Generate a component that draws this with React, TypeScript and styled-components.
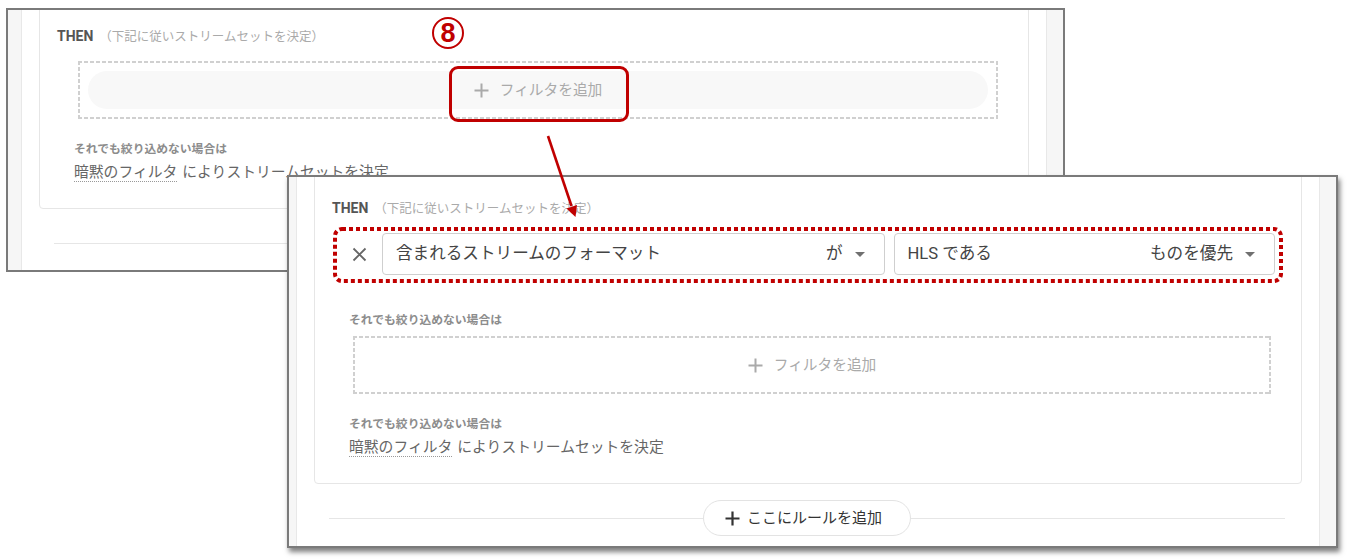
import React from "react";
import styled, { createGlobalStyle } from "styled-components";

const GlobalStyle = createGlobalStyle`
  html, body { margin: 0; padding: 0; background: #fff; }
  body { font-family: Roboto, "Noto Sans CJK JP", sans-serif; }
  *, *::before, *::after { box-sizing: border-box; }
`;

const JP = `Roboto, "Noto Sans CJK JP", sans-serif`;
const RED = "#c00000";

const Canvas = styled.div`
  position: relative;
  width: 1347px;
  height: 559px;
  overflow: hidden;
  background: #fff;
`;

const Frame = styled.section<{
  $left: number;
  $top: number;
  $width: number;
  $height: number;
  $shadow?: boolean;
}>`
  position: absolute;
  left: ${(p) => p.$left}px;
  top: ${(p) => p.$top}px;
  width: ${(p) => p.$width}px;
  height: ${(p) => p.$height}px;
  border: 2px solid #7a7a7a;
  background: #fff;
  display: flex;
  overflow: hidden;
  box-shadow: ${(p) => (p.$shadow ? "2px 4px 5px rgba(0,0,0,0.5)" : "none")};
`;

const SideStrip = styled.div<{ $width: number; $side: "left" | "right" }>`
  flex: 0 0 ${(p) => p.$width}px;
  background: #f6f6f6;
  ${(p) => (p.$side === "left" ? "border-right" : "border-left")}: 1px solid #e8e8e8;
`;

const Main = styled.div`
  flex: 1;
  min-width: 0;
  padding: 0 17px;
  display: flex;
  flex-direction: column;
`;

const Card = styled.div<{ $offset: number }>`
  margin-top: ${(p) => p.$offset}px;
  border: 1px solid #e6e6e6;
  border-radius: 4px;
  padding: 34px 16px 26px 17px;
  display: flex;
  flex-direction: column;
  flex-shrink: 0;
`;

const Header = styled.div`
  display: flex;
  align-items: baseline;
  gap: 6px;
  height: 18px;
  margin-bottom: 16px;
`;

const HeaderTitle = styled.span`
  font: 700 14px/18px ${JP};
  color: #555;
`;

const HeaderNote = styled.span`
  font: 400 12.5px/18px ${JP};
  color: #aaa;
`;

const FilterRow = styled.div`
  display: flex;
  align-items: center;
  height: 42px;
  padding: 0 10px 0 20px;
`;

const RemoveButton = styled.button`
  flex: 0 0 15px;
  width: 15px;
  height: 15px;
  margin-right: 15px;
  padding: 0;
  border: 0;
  background: none;
  color: #666;
  display: flex;
`;

const Select = styled.div<{ $basis: number }>`
  flex: 1 1 ${(p) => p.$basis}px;
  min-width: 0;
  height: 42px;
  border: 1px solid #cfcfcf;
  border-radius: 4px;
  display: flex;
  align-items: center;
  padding: 0 19px 0 13px;
  font: 400 16.6px/22px ${JP};
  color: #444;
  & + & {
    margin-left: 9px;
  }
`;

const SelectValue = styled.span`
  flex: 1;
  white-space: nowrap;
`;

const SelectSuffix = styled.span`
  white-space: nowrap;
  margin-right: 12px;
`;

const FallbackBlock = styled.div<{ $gap: number }>`
  margin-top: ${(p) => p.$gap}px;
  display: flex;
  flex-direction: column;
`;

const FallbackLabel = styled.div`
  margin-left: 17px;
  font: 700 11.8px/16px ${JP};
  color: #8c8c8c;
`;

const dash = (dir: string) =>
  `repeating-linear-gradient(${dir}, #d0d0d0 0 4px, transparent 4px 6px)`;

const AddFilterBox = styled.div<{ $spaced?: boolean }>`
  margin: ${(p) => (p.$spaced ? "8px" : "0")} 14px 0 21px;
  height: 58px;
  padding: 10px 10px;
  display: flex;
  background: ${dash("90deg")} top left / 100% 2px no-repeat,
    ${dash("90deg")} bottom left / 100% 2px no-repeat,
    ${dash("180deg")} top left / 2px 100% no-repeat,
    ${dash("180deg")} top right / 2px 100% no-repeat;
`;

const AddFilterButton = styled.button<{ $hover?: boolean }>`
  flex: 1;
  border: 0;
  border-radius: 19px;
  background: ${(p) => (p.$hover ? "#f8f8f8" : "transparent")};
  display: flex;
  align-items: center;
  justify-content: center;
  gap: 11px;
  color: #aaa;
  font: 400 14.7px/20px ${JP};
  padding: 0;
`;

const ImplicitText = styled.div`
  margin: 5px 0 0 17px;
  font: 400 14.8px/20px ${JP};
  color: #666;
`;

const ImplicitLink = styled.span`
  border-bottom: 1px dotted #999;
  margin-right: 5px;
`;

const Footer = styled.div`
  margin: 16px 17px 0 15px;
  height: 36px;
  display: flex;
  align-items: center;
  flex-shrink: 0;
  &::before,
  &::after {
    content: "";
    flex: 1;
    height: 1px;
    background: #e6e6e6;
  }
`;

const AddRuleButton = styled.button`
  height: 36px;
  border: 1px solid #e3e3e3;
  border-radius: 18px;
  background: #fff;
  padding: 0 28px 0 21px;
  display: flex;
  align-items: center;
  gap: 7px;
  font: 400 15px/20px ${JP};
  color: #333;
`;

/* annotations */
const StepBadge = styled.span`
  position: absolute;
  left: 432px;
  top: 17px;
  width: 32px;
  height: 32px;
  border: 2px solid ${RED};
  border-radius: 50%;
  color: ${RED};
  font: 700 27px/28px "Liberation Sans", Arial, sans-serif;
  display: flex;
  align-items: center;
  justify-content: center;
`;

const Highlight = styled.div`
  position: absolute;
  left: 449px;
  top: 66px;
  width: 180px;
  height: 56px;
  border: 3px solid ${RED};
  border-radius: 9px;
`;

const Overlay = styled.svg<{ $left: number; $top: number }>`
  position: absolute;
  left: ${(p) => p.$left}px;
  top: ${(p) => p.$top}px;
  overflow: visible;
`;

const PlusIcon = ({ size, weight }: { size: number; weight: number }) => (
  <svg width={size} height={size} viewBox={`0 0 ${size} ${size}`}>
    <path
      d={`M${size / 2} 0.5V${size - 0.5}M0.5 ${size / 2}H${size - 0.5}`}
      stroke="currentColor"
      strokeWidth={weight}
      fill="none"
    />
  </svg>
);

const CloseIcon = () => (
  <svg width="15" height="15" viewBox="0 0 15 15">
    <path d="M1.5 1.5L13.5 13.5M13.5 1.5L1.5 13.5" stroke="currentColor" strokeWidth="1.8" fill="none" />
  </svg>
);

const Caret = () => (
  <svg width="10" height="5" viewBox="0 0 10 5">
    <path d="M0 0H10L5 5Z" fill="#707070" />
  </svg>
);

type RuleProps = {
  offset: number;
  withFilter?: boolean;
};

const RuleContent = ({ offset, withFilter }: RuleProps) => (
  <>
    <Card $offset={offset}>
      <Header>
        <HeaderTitle>THEN</HeaderTitle>
        <HeaderNote>（下記に従いストリームセットを決定）</HeaderNote>
      </Header>
      {withFilter ? (
        <>
          <FilterRow>
            <RemoveButton aria-label="削除">
              <CloseIcon />
            </RemoveButton>
            <Select $basis={502}>
              <SelectValue>含まれるストリームのフォーマット</SelectValue>
              <SelectSuffix>が</SelectSuffix>
              <Caret />
            </Select>
            <Select $basis={381}>
              <SelectValue>HLS である</SelectValue>
              <SelectSuffix>ものを優先</SelectSuffix>
              <Caret />
            </Select>
          </FilterRow>
          <FallbackBlock $gap={37}>
            <FallbackLabel>それでも絞り込めない場合は</FallbackLabel>
            <AddFilterBox $spaced>
              <AddFilterButton>
                <PlusIcon size={15} weight={2} />
                フィルタを追加
              </AddFilterButton>
            </AddFilterBox>
          </FallbackBlock>
        </>
      ) : (
        <AddFilterBox>
          <AddFilterButton $hover>
            <PlusIcon size={15} weight={2} />
            フィルタを追加
          </AddFilterButton>
        </AddFilterBox>
      )}
      <FallbackBlock $gap={22}>
        <FallbackLabel>それでも絞り込めない場合は</FallbackLabel>
        <ImplicitText>
          <ImplicitLink>暗黙のフィルタ</ImplicitLink>によりストリームセットを決定
        </ImplicitText>
      </FallbackBlock>
    </Card>
    <Footer>
      <AddRuleButton>
        <PlusIcon size={15} weight={2.2} />
        ここにルールを追加
      </AddRuleButton>
    </Footer>
  </>
);

export default function App() {
  return (
    <Canvas>
      <GlobalStyle />
      <Frame $left={6} $top={8} $width={1059} $height={264}>
        <SideStrip $width={14} $side="left" />
        <Main>
          <RuleContent offset={-18} />
        </Main>
        <SideStrip $width={17} $side="right" />
      </Frame>

      <StepBadge>8</StepBadge>
      <Highlight />

      <Frame $left={287} $top={175} $width={1051} $height={373} $shadow>
        <SideStrip $width={8} $side="left" />
        <Main>
          <RuleContent offset={-13} withFilter />
        </Main>
        <SideStrip $width={17} $side="right" />
      </Frame>

      <Overlay $left={333} $top={227} width="950" height="56" viewBox="0 0 950 56">
        <rect x="2" y="2" width="946" height="52" rx="7" fill="none" stroke={RED} strokeWidth="4" strokeDasharray="4 3" />
      </Overlay>

      <Overlay $left={540} $top={130} width="45" height="92" viewBox="540 130 45 92">
        <line x1="548" y1="136" x2="571.5" y2="206" stroke={RED} strokeWidth="2.6" />
        <polygon points="575.5,217 566.5,208.5 577,205" fill={RED} />
      </Overlay>
    </Canvas>
  );
}
